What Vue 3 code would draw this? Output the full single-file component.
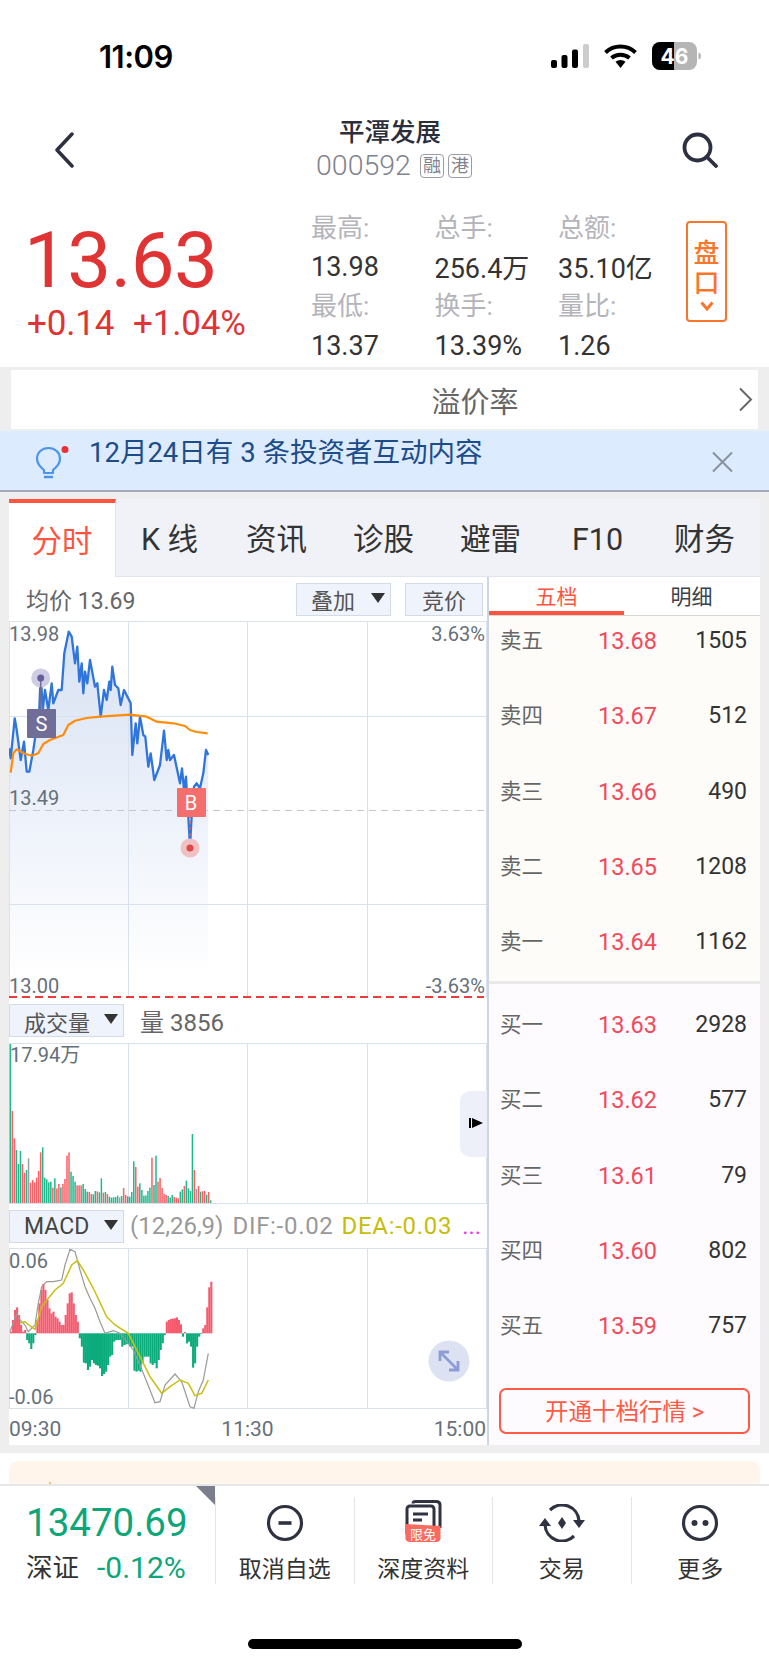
<script setup>
const tabs = ['分时', 'K 线', '资讯', '诊股', '避雷', 'F10', '财务']

const stats = [
  ['最高:', '总手:', '总额:'],
  ['13.98', '256.4万', '35.10亿'],
  ['最低:', '换手:', '量比:'],
  ['13.37', '13.39%', '1.26']
]

const sells = [
  ['卖五', '13.68', '1505'],
  ['卖四', '13.67', '512'],
  ['卖三', '13.66', '490'],
  ['卖二', '13.65', '1208'],
  ['卖一', '13.64', '1162']
]
const buys = [
  ['买一', '13.63', '2928'],
  ['买二', '13.62', '577'],
  ['买三', '13.61', '79'],
  ['买四', '13.60', '802'],
  ['买五', '13.59', '757']
]

// chart data is read off the reference at 3x, converted back to page px here
function line(str, oy) {
  return str.trim().split(/\s+/).map(p => {
    const [x, y] = p.split(',').map(Number)
    return `${(x / 3).toFixed(1)},${(oy + y / 3).toFixed(1)}`
  }).join(' ')
}

const priceRaw = '28,775 32,805 44,685 50,720 62,810 72,755 80,845 88,845 100,780 118,660 122,545 128,660 135,600 145,660 155,580 160,640 175,600 185,600 193,490 206,425 215,440 225,520 232,470 238,575 245,520 250,610 255,545 262,580 270,510 285,590 292,580 302,680 312,600 320,630 328,575 332,600 337,530 345,585 355,595 362,645 372,600 392,640 397,795 407,700 412,760 420,680 430,735 436,740 445,830 452,790 463,870 480,825 492,722 500,810 505,780 510,810 522,795 540,880 546,835 552,900 558,860 565,980 570,1070 576,960 582,890 590,880 600,895 610,850 618,780 625,795'
const pricePts = line(priceRaw, 490)
const priceArea = `9.5,975 ${pricePts} 208,975`
const avgPts = line('32,848 40,790 50,778 70,790 95,797 115,790 130,762 150,750 190,735 205,705 225,692 260,684 300,680 390,674 440,680 470,695 520,700 555,708 570,720 590,726 623,730', 490)
const difPts = line('30,395 50,340 60,360 75,375 85,395 105,375 115,310 125,260 140,245 160,245 185,240 195,195 210,148 225,155 240,210 255,260 270,295 285,325 300,365 315,400 340,392 360,400 400,450 430,520 450,570 465,608 480,605 495,555 525,522 545,545 560,590 570,620 582,625 595,575 610,540 625,460', 1200)
const deaPts = line('60,368 75,365 90,378 105,388 125,320 145,295 165,270 190,250 215,195 232,182 250,210 280,265 320,350 345,375 385,400 420,470 450,530 485,580 510,560 540,540 565,550 585,587 605,580 625,540', 1200)

const volColors = { g: '#1fb98c', r: '#fb5f66', y: '#9a9ea6' }
const volBars = 'g12 r213 r295 g330 g372 g333 r372 r398 g390 y355 r428 r420 r427 r413 r393 r337 g322 g413 g418 g427 g425 r443 g415 r445 r432 g442 r432 r417 r347 r337 g395 g408 g425 r436 r436 r436 g432 g447 g455 r456 r462 g463 g453 r454 g457 g415 r458 g456 r462 g470 g473 g472 g471 g467 y472 g468 r444 r465 g469 g470 g456 g364 r381 r440 g430 g450 g467 g466 g453 g443 r353 g435 g347 r425 r414 r444 r461 r465 g468 g473 g465 r471 r473 r475 g455 g448 r438 g422 g445 g453 g282 r390 y447 r438 g455 r454 r453 g464 r456 g481'
  .split(' ').map((s, i) => {
    const y = 1040 + Number(s.slice(1)) / 3
    return { x: 9.6 + i * 2.023, y, h: 1203 - y, fill: volColors[s[0]] }
  })

const macdBars = 'r395 r360 r330 r322 r345 r375 r395 r390 g420 g430 g447 g430 g405 r360 r310 r270 r252 r270 r300 r325 r340 r335 r350 r355 r365 r375 r375 r345 r310 r280 r277 r310 r345 r365 g415 g440 g488 g490 g510 g500 g480 g490 g495 g497 g505 g528 g522 g515 g495 g470 g465 g425 g420 g420 g420 g440 g435 g433 g432 g440 g440 g512 g515 g512 g515 g490 g470 g470 g470 g490 g495 g490 g505 g480 g450 g430 g405 r365 r360 r357 r356 r355 r352 r360 r373 g410 r396 g430 g425 g440 g503 g490 g440 g410 g402 r385 r375 r322 r262 r245'
  .split(' ').map((s, i) => {
    const y = 1200 + Number(s.slice(1)) / 3
    const base = 1333.3
    return {
      x: 10 + i * 2.023,
      y: Math.min(y, base),
      h: Math.abs(base - y),
      fill: s[0] === 'r' ? '#f55a6e' : '#0bab7c'
    }
  })
</script>

<template>
  <div class="page">
    <div class="status">
      <span class="time">11:09</span>
      <div class="status-icons">
        <svg width="38" height="24" viewBox="0 0 38 24">
          <rect x="0" y="16" width="6" height="8" rx="2" fill="#000" />
          <rect x="10.500" y="11" width="6" height="13" rx="2" fill="#000" />
          <rect x="21" y="5.500" width="6" height="18.500" rx="2" fill="#000" />
          <rect x="32" y="0" width="6" height="24" rx="2" fill="#ccc" />
        </svg>
        <svg width="33" height="24" viewBox="0 0 33 24">
          <path d="M1.500 8.500A22 22 0 0 1 31.500 8.500" fill="none" stroke="#000" stroke-width="4" />
          <path d="M7.500 14A14 14 0 0 1 25.500 14" fill="none" stroke="#000" stroke-width="4" />
          <path d="M11.500 17.800A7.500 7.500 0 0 1 21.500 17.800L16.500 24Z" fill="#000" />
        </svg>
        <svg width="49" height="28" viewBox="0 0 49 28">
          <rect x="0" y="0" width="45" height="28" rx="8" fill="#b5b5b5" />
          <path d="M8 0H22V28H8A8 8 0 0 1 0 20V8A8 8 0 0 1 8 0Z" fill="#000" />
          <path d="M46.500 10.500C48.500 11 49 12.500 49 14S48.500 17 46.500 17.500Z" fill="#b5b5b5" />
          <text x="22.500" y="22" text-anchor="middle" class="batt">46</text>
        </svg>
      </div>
    </div>

    <div class="nav">
      <svg class="back" width="20" height="36" viewBox="0 0 20 36">
        <path d="M18 2L3 18L18 34" fill="none" stroke="#2d3040" stroke-width="3.500" stroke-linecap="round" stroke-linejoin="round" />
      </svg>
      <div class="nav-title">
        <div class="name">平潭发展</div>
        <div class="code">
          000592
          <span class="tag">融</span><span class="tag">港</span>
        </div>
      </div>
      <svg class="search" width="36" height="36" viewBox="0 0 36 36">
        <circle cx="15.500" cy="15.500" r="13" fill="none" stroke="#2d3040" stroke-width="3.800" />
        <path d="M25 25L34 34" fill="none" stroke="#2d3040" stroke-width="3.800" stroke-linecap="round" />
      </svg>
    </div>

    <div class="quote">
      <div class="price-col">
        <div class="price">13.63</div>
        <div class="change"><span>+0.14</span><span>+1.04%</span></div>
      </div>
      <div class="stats">
        <template v-for="(row, i) in stats" :key="i">
          <div v-for="cell in row" :key="cell" :class="i % 2 ? 'stat-val' : 'stat-label'">{{ cell }}</div>
        </template>
      </div>
      <div class="pankou">
        <span>盘</span><span>口</span>
        <svg width="14" height="10" viewBox="0 0 14 10">
          <path d="M1.500 1.500L7 8L12.500 1.500" fill="none" stroke="#f8762c" stroke-width="3" />
        </svg>
      </div>
    </div>

    <div class="premium-band">
      <div class="premium">
        <span>溢价率</span>
        <svg class="premium-arrow" width="15" height="25" viewBox="0 0 15 25">
          <path d="M2 1.500L13 12.500L2 23.500" fill="none" stroke="#666" stroke-width="2" />
        </svg>
      </div>
    </div>

    <div class="notice">
      <svg class="bulb" width="36" height="34" viewBox="0 0 36 34">
        <path d="M9 24C4 20 2 16 2 13C2 6.500 7 2 13.500 2S25 6.500 25 13C25 16 23 20 18 24V27H9Z" fill="none" stroke="#4a94ec" stroke-width="2.200" stroke-linejoin="round" />
        <path d="M9 31H18" stroke="#4a94ec" stroke-width="2.500" />
        <circle cx="30" cy="3.500" r="3.500" fill="#e8303a" />
      </svg>
      <span class="notice-text">12月24日有 3 条投资者互动内容</span>
      <svg class="notice-close" width="23" height="22" viewBox="0 0 23 22">
        <path d="M2 1.500L21 20.500M21 1.500L2 20.500" stroke="#8a919c" stroke-width="2" />
      </svg>
    </div>

    <div class="main">
      <div class="tabs">
        <div v-for="(t, i) in tabs" :key="t" class="tab" :class="{ active: i === 0 }">{{ t }}</div>
      </div>
      <div class="body">
        <div class="left">
          <div class="toolbar">
            <span class="avg">均价 13.69</span>
            <div class="tool-btns">
              <span class="btn btn-add">叠加<i class="caret"></i></span>
              <span class="btn btn-bid">竞价</span>
            </div>
          </div>

          <svg class="chart" width="478" height="377" viewBox="9 621 478 377">
            <defs>
              <linearGradient id="areaFill" x1="0" y1="0" x2="0" y2="1">
                <stop offset="0" stop-color="#d8e2f4" />
                <stop offset="1" stop-color="#ffffff" />
              </linearGradient>
            </defs>
            <polygon :points="priceArea" fill="url(#areaFill)" />
            <g stroke="#d9e1ed" stroke-width="1">
              <path d="M9.500 621V998M128.500 621V998M247.500 621V998M367.500 621V998M486.500 621V998" />
              <path d="M9 621.500H487M9 716.500H487M9 904.500H487" />
            </g>
            <path d="M9 810.500H484" stroke="#c4c7cc" stroke-width="1" stroke-dasharray="7 5" />
            <path d="M9 997H484" stroke="#ee3a3a" stroke-width="2" stroke-dasharray="8 5" />
            <polyline :points="pricePts" fill="none" stroke="#2f75dc" stroke-width="2.300" stroke-linejoin="round" />
            <polyline :points="avgPts" fill="none" stroke="#ff8c0a" stroke-width="2.200" stroke-linejoin="round" />

            <circle cx="40.700" cy="678" r="9.500" fill="#cfcde2" />
            <path d="M40.700 678V710" stroke="#6f6b9a" stroke-width="1.500" />
            <circle cx="40.700" cy="678" r="3.500" fill="#635f9c" />
            <rect x="27" y="709" width="29" height="29" rx="1" fill="#716d99" />
            <text x="41.500" y="731" text-anchor="middle" class="mark">S</text>

            <path d="M190 815V846" stroke="#ea5a5a" stroke-width="1.500" stroke-dasharray="3 3" />
            <circle cx="190" cy="848" r="9.500" fill="#f0c0c2" />
            <circle cx="190" cy="848" r="3.500" fill="#e04848" />
            <rect x="177" y="788" width="29" height="29" rx="1" fill="#f56e6e" />
            <text x="191" y="810" text-anchor="middle" class="mark">B</text>

            <text x="9" y="641" class="axis">13.98</text>
            <text x="485" y="641" text-anchor="end" class="axis">3.63%</text>
            <text x="9" y="805" class="axis">13.49</text>
            <text x="9" y="993" class="axis">13.00</text>
            <text x="485" y="993" text-anchor="end" class="axis">-3.63%</text>
          </svg>

          <div class="sub-head">
            <span class="btn btn-sel">成交量<i class="caret"></i></span>
            <span class="vol-val">量 3856</span>
          </div>

          <svg class="chart" width="478" height="161" viewBox="9 1043 478 161">
            <g stroke="#d9e1ed" stroke-width="1">
              <path d="M9.500 1043V1204M128.500 1043V1204M247.500 1043V1204M367.500 1043V1204M486.500 1043V1204" />
              <path d="M9 1043.500H487M9 1203.500H487" />
            </g>
            <rect v-for="(b, i) in volBars" :key="i" :x="b.x" :y="b.y" width="1.500" :height="b.h" :fill="b.fill" />
            <text x="10" y="1062" class="axis">17.94万</text>
            <path d="M487 1091H470A10 10 0 0 0 460 1101V1147A10 10 0 0 0 470 1157H487Z" fill="#edf0f8" />
            <rect x="469" y="1118" width="2" height="10" fill="#000" />
            <path d="M472 1118L483 1123L472 1128Z" fill="#000" />
          </svg>

          <div class="sub-head macd-head">
            <span class="btn btn-sel btn-macd">MACD<i class="caret"></i></span>
            <span class="macd-params">(12,26,9)</span>
            <span class="macd-dif">DIF:-0.02</span>
            <span class="macd-dea">DEA:-0.03</span>
            <span class="macd-more">...</span>
          </div>

          <svg class="chart" width="478" height="161" viewBox="9 1248 478 161">
            <g stroke="#d9e1ed" stroke-width="1">
              <path d="M9.500 1248V1409M128.500 1248V1409M247.500 1248V1409M367.500 1248V1409M486.500 1248V1409" />
              <path d="M9 1248.500H487M9 1408.500H487" />
            </g>
            <rect v-for="(b, i) in macdBars" :key="i" :x="b.x" :y="b.y" width="2.100" :height="b.h" :fill="b.fill" />
            <polyline :points="difPts" fill="none" stroke="#9a9a9a" stroke-width="1.200" />
            <polyline :points="deaPts" fill="none" stroke="#c9bf12" stroke-width="1.500" />
            <text x="9" y="1268" class="axis">0.06</text>
            <text x="9" y="1404" class="axis">-0.06</text>
            <circle cx="449" cy="1361" r="20.500" fill="#dde2f3" />
            <path d="M440 1352L458 1370M440 1361V1352H449M458 1361V1370H449" fill="none" stroke="#8c9dd6" stroke-width="2.800" />
          </svg>

          <div class="time-axis">
            <span>09:30</span><span>11:30</span><span>15:00</span>
          </div>
        </div>

        <div class="right">
          <div class="depth-tabs">
            <span class="depth-tab on">五档</span>
            <span class="depth-tab">明细</span>
          </div>
          <div class="book sell">
            <div v-for="r in sells" :key="r[0]" class="book-row">
              <span class="b-name">{{ r[0] }}</span>
              <span class="b-price">{{ r[1] }}</span>
              <span class="b-vol">{{ r[2] }}</span>
            </div>
          </div>
          <div class="book buy">
            <div v-for="r in buys" :key="r[0]" class="book-row">
              <span class="b-name">{{ r[0] }}</span>
              <span class="b-price">{{ r[1] }}</span>
              <span class="b-vol">{{ r[2] }}</span>
            </div>
            <div class="ten-btn">开通十档行情 &gt;</div>
          </div>
        </div>
      </div>
    </div>

    <div class="promo-wrap">
      <div class="promo"><i class="promo-tip"></i></div>
    </div>

    <div class="bar">
      <div class="index">
        <i class="index-corner"></i>
        <div class="index-val">13470.69</div>
        <div class="index-sub"><span class="index-name">深证</span><span>-0.12%</span></div>
      </div>
      <div class="action">
        <svg width="38" height="38" viewBox="0 0 38 38">
          <circle cx="19" cy="19" r="16.500" fill="none" stroke="#2f3240" stroke-width="3.200" />
          <path d="M12.500 19H25.500" stroke="#2f3240" stroke-width="3.600" />
        </svg>
        <span>取消自选</span>
      </div>
      <div class="action">
        <svg width="38" height="42" viewBox="0 0 38 42">
          <path d="M9 3.500C9 2 10 1.500 11.500 1.500H32C34.500 1.500 36 3 36 5V28" fill="none" stroke="#2f3240" stroke-width="3" />
          <rect x="3" y="6" width="27" height="30" rx="3" fill="#fff" stroke="#2f3240" stroke-width="3" />
          <path d="M9 14H24M9 20H18" stroke="#2f3240" stroke-width="3" />
          <path d="M1.500 24L36.500 26V37A4 4 0 0 1 32.500 42H5.500A4 4 0 0 1 1.500 37Z" fill="#fb6a5e" />
          <text x="19" y="39" text-anchor="middle" class="free">限免</text>
        </svg>
        <span>深度资料</span>
      </div>
      <div class="action">
        <svg width="46" height="38" viewBox="0 0 46 38">
          <path d="M11 6A17 17 0 0 1 40 17" fill="none" stroke="#2f3240" stroke-width="3.200" />
          <path d="M34 16H46L40 24Z" fill="#2f3240" />
          <path d="M35 32A17 17 0 0 1 6 21" fill="none" stroke="#2f3240" stroke-width="3.200" />
          <path d="M0 22H12L6 14Z" fill="#2f3240" />
          <path d="M23 13L27 19L23 25L19 19Z" fill="#2f3240" />
        </svg>
        <span>交易</span>
      </div>
      <div class="action">
        <svg width="38" height="38" viewBox="0 0 38 38">
          <circle cx="19" cy="19" r="16.500" fill="none" stroke="#2f3240" stroke-width="3.200" />
          <circle cx="13.500" cy="19" r="3" fill="#2f3240" />
          <circle cx="24.500" cy="19" r="3" fill="#2f3240" />
        </svg>
        <span>更多</span>
      </div>
    </div>

    <div class="home"><i></i></div>
  </div>
</template>

<style scoped>
.page {
  width: 769px;
  height: 1665px;
  overflow: hidden;
  display: flex;
  flex-direction: column;
  background: #fff;
  font-family: Roboto, "Noto Sans CJK SC", sans-serif;
  color: #333;
}

.status {
  height: 112px;
  flex: none;
  display: flex;
  align-items: center;
  justify-content: space-between;
  padding: 0 68px 0 99px;
}
.time {
  font-family: Inter, sans-serif;
  font-size: 31px;
  font-weight: 600;
  color: #000;
  letter-spacing: -0.5px;
}
.status-icons {
  display: flex;
  align-items: center;
  gap: 15px;
}
.batt {
  font-family: Inter, sans-serif;
  font-size: 21px;
  font-weight: 700;
  fill: #fff;
}

.nav {
  height: 96px;
  flex: none;
  display: flex;
  justify-content: space-between;
  padding: 0 51px 0 54px;
}
.back, .search {
  margin-top: 20px;
}
.back {
  margin-right: 32px;
}
.nav-title {
  text-align: center;
}
.name {
  font-size: 25.500px;
  line-height: 40px;
  font-weight: 500;
  color: #2b2d3a;
  margin-right: 8px;
}
.code {
  display: flex;
  align-items: center;
  font-size: 28.500px;
  line-height: 28px;
  font-weight: 300;
  color: #7f8290;
}
.tag {
  width: 24px;
  height: 24px;
  margin-left: 4px;
  border: 1px solid #9a9ca6;
  border-radius: 4px;
  box-sizing: border-box;
  font-size: 18px;
  line-height: 21px;
  font-weight: 400;
  text-align: center;
}
.tag:first-of-type {
  margin-left: 9px;
}

.quote {
  height: 159px;
  flex: none;
  display: flex;
}
.price-col {
  width: 311px;
  padding: 13px 0 0 24px;
  box-sizing: border-box;
  color: #e03434;
}
.price {
  font-size: 78px;
  line-height: 80px;
  letter-spacing: -0.5px;
}
.change {
  display: flex;
  gap: 19px;
  margin-top: 3px;
  padding-left: 3px;
  font-size: 35px;
  line-height: 40px;
  font-weight: 400;
  letter-spacing: -0.2px;
}
.stats {
  width: 371px;
  display: grid;
  grid-template-columns: repeat(3, 123.500px);
  grid-auto-rows: 39.300px;
  align-items: center;
  font-size: 26px;
}
.stat-label {
  color: #b4b4bb;
  margin-bottom: 5px;
}
.stat-val {
  color: #333;
  font-size: 27px;
}
.pankou {
  width: 41px;
  height: 101px;
  margin: 13px 0 0 4px;
  padding-top: 15px;
  box-sizing: border-box;
  border: 2px solid #f8762c;
  border-radius: 4px;
  display: flex;
  flex-direction: column;
  align-items: center;
  color: #f8762c;
  font-size: 26px;
  line-height: 30px;
  font-weight: 500;
}
.pankou svg {
  margin-top: 3px;
}

.premium-band {
  flex: none;
  background: #eeeeee;
  padding: 3px 11px 2px;
}
.premium {
  height: 59px;
  box-sizing: border-box;
  padding-left: 181px;
  display: flex;
  align-items: center;
  justify-content: center;
  position: relative;
  background: #fff;
  font-size: 29px;
  color: #666;
}
.premium-arrow {
  position: absolute;
  right: 5px;
  top: 17px;
}

.notice {
  height: 59px;
  flex: none;
  display: flex;
  justify-content: flex-start;
  background: #dcebfd;
  border-bottom: 2px solid #a5abb4;
  position: relative;
}
.bulb {
  position: absolute;
  left: 35px;
  top: 15px;
}
.notice-text {
  margin-left: 89px;
  line-height: 44px;
  font-size: 27.500px;
  color: #1c4c8a;
  white-space: nowrap;
}
.notice-close {
  position: absolute;
  left: 711px;
  top: 20px;
}

.main {
  flex: none;
  padding: 7px 9px 8px;
  background: #eeeeee;
}
.tabs {
  height: 78px;
  display: flex;
  background: #f0f2f7;
  border-bottom: 1px solid #e0e5ee;
  box-sizing: border-box;
}
.tab {
  width: 107px;
  flex: none;
  text-align: center;
  line-height: 82px;
  font-size: 30.500px;
  color: #333;
}
.tab.active {
  background: #fff;
  color: #ff5540;
  border-top: 4px solid #ff5540;
  line-height: 77px;
  height: 78px;
  box-sizing: border-box;
  border-right: 1px solid #e0e5ee;
}
.body {
  display: flex;
  height: 868px;
}
.left {
  width: 478px;
  flex: none;
  background: #fff;
  display: flex;
  flex-direction: column;
  border-right: 2px solid #ccd6e4;
}
.toolbar {
  height: 44px;
  flex: none;
  display: flex;
  align-items: center;
  justify-content: space-between;
  padding: 0 4px 0 17px;
  box-sizing: border-box;
}
.avg {
  font-size: 23px;
  color: #666;
}
.tool-btns {
  display: flex;
  gap: 14px;
}
.btn {
  height: 33px;
  display: flex;
  align-items: center;
  box-sizing: border-box;
  background: #eff3fb;
  border: 1px solid #d5dbe6;
  font-size: 22px;
  color: #555;
}
.btn-add {
  width: 95px;
  padding-left: 14px;
}
.btn-bid {
  width: 78px;
  justify-content: center;
}
.caret {
  width: 0;
  height: 0;
  margin: -3px 0 0 auto;
  border: 7px solid transparent;
  border-top: 10px solid #333;
  border-bottom: 0;
}
.btn-add .caret {
  margin-right: 5px;
}
.chart {
  display: block;
  flex: none;
}
.axis {
  font-family: Roboto, "Noto Sans CJK SC", sans-serif;
  font-size: 20px;
  fill: #667079;
}
.mark {
  font-family: Roboto, sans-serif;
  font-size: 20px;
  fill: #fff;
}
.free {
  font-family: "Noto Sans CJK SC", sans-serif;
  font-size: 13px;
  fill: #fff;
}
.sub-head {
  height: 45px;
  flex: none;
  display: flex;
  align-items: center;
}
.macd-head {
  height: 44px;
  gap: 0;
  font-size: 24px;
  white-space: nowrap;
}
.btn-sel {
  width: 115px;
  padding: 0 5px 0 14px;
}
.btn-macd {
  font-size: 23px;
  color: #444;
}
.vol-val {
  margin-left: 16px;
  font-size: 24px;
  color: #666;
}
.macd-params {
  margin-left: 6px;
  color: #999;
}
.macd-dif {
  margin-left: 9px;
  color: #999;
  letter-spacing: 0.7px;
}
.macd-dea {
  margin-left: 8px;
  color: #c5bd0a;
  letter-spacing: 0.7px;
}
.macd-more {
  margin-left: 10px;
  color: #e83ce8;
}
.time-axis {
  flex: 1;
  display: flex;
  justify-content: space-between;
  align-items: center;
  padding: 3px 1px 0 0;
  font-size: 21px;
  color: #667079;
}

.right {
  flex: 1;
  display: flex;
  flex-direction: column;
  background: #fff;
}
.depth-tabs {
  height: 39px;
  flex: none;
  display: flex;
  box-sizing: border-box;
  border-bottom: 1px solid #d4dad2;
}
.depth-tab {
  width: 135px;
  height: 38px;
  box-sizing: border-box;
  padding-top: 2px;
  text-align: center;
  font-size: 21px;
  line-height: 36px;
  color: #3c3f4c;
}
.depth-tab.on {
  color: #ff5540;
  border-bottom: 4px solid #ff5540;
}
.book {
  display: flex;
  flex-direction: column;
  gap: 45.300px;
}
.sell {
  height: 368px;
  padding-top: 10px;
  box-sizing: border-box;
  flex: none;
  background: #fdfcf8;
  border-bottom: 3px solid #e9e9e9;
}
.buy {
  flex: 1;
  padding-top: 26px;
  box-sizing: border-box;
  background: #fdfbfe;
}
.book-row {
  height: 30px;
  line-height: 30px;
  display: flex;
  padding: 0 13px 0 11px;
  flex: none;
}
.b-name {
  width: 80px;
  font-size: 21.500px;
  color: #666;
}
.b-price {
  width: 77px;
  text-align: right;
  font-size: 23.500px;
  color: #f04b5c;
}
.b-vol {
  flex: 1;
  text-align: right;
  font-size: 23px;
  color: #333;
}
.ten-btn {
  height: 46px;
  margin: 2px 10px 0;
  border: 2px solid #ff5a45;
  border-radius: 7px;
  box-sizing: border-box;
  text-align: center;
  font-size: 23.500px;
  line-height: 44px;
  color: #ff5a45;
}

.promo-wrap {
  height: 31px;
  flex: none;
  padding: 8px 9px 0;
  box-sizing: border-box;
  overflow: hidden;
}
.promo {
  height: 40px;
  border-radius: 9px;
  background: #fff5ea;
  position: relative;
}
.promo-tip {
  position: absolute;
  left: 38px;
  top: 20px;
  width: 0;
  height: 0;
  border: 3px solid transparent;
  border-bottom: 8px solid #f7ae3c;
  border-top: 0;
}

.bar {
  height: 108px;
  flex: none;
  display: flex;
  background: #fff;
  border-top: 2px solid #e6e7ea;
  box-sizing: border-box;
}
.index {
  width: 215px;
  flex: none;
  padding: 13px 0 0 26px;
  box-sizing: border-box;
  position: relative;
  color: #0da678;
}
.index-corner {
  position: absolute;
  top: 0;
  right: 0;
  width: 0;
  height: 0;
  border-top: 19px solid #7b7f8c;
  border-left: 19px solid transparent;
}
.index-val {
  font-size: 38.500px;
  line-height: 48px;
  white-space: nowrap;
}
.index-sub {
  display: flex;
  align-items: center;
  gap: 18px;
  margin-top: 3px;
  font-size: 30px;
  line-height: 36px;
  white-space: nowrap;
}
.index-name {
  color: #333;
  font-size: 26.500px;
}
.action {
  flex: 1;
  height: 87px;
  margin-top: 11px;
  display: flex;
  flex-direction: column;
  align-items: center;
  justify-content: flex-end;
  border-left: 1px solid #e4e5e8;
  font-size: 23px;
  line-height: 34px;
  color: #333;
}
.action svg {
  margin-bottom: 11px;
}
.action span {
  margin-bottom: -3px;
}
.home {
  flex: 1;
  display: flex;
  justify-content: center;
  padding-top: 47px;
}
.home i {
  width: 274px;
  height: 10px;
  border-radius: 5px;
  background: #000;
}
</style>
